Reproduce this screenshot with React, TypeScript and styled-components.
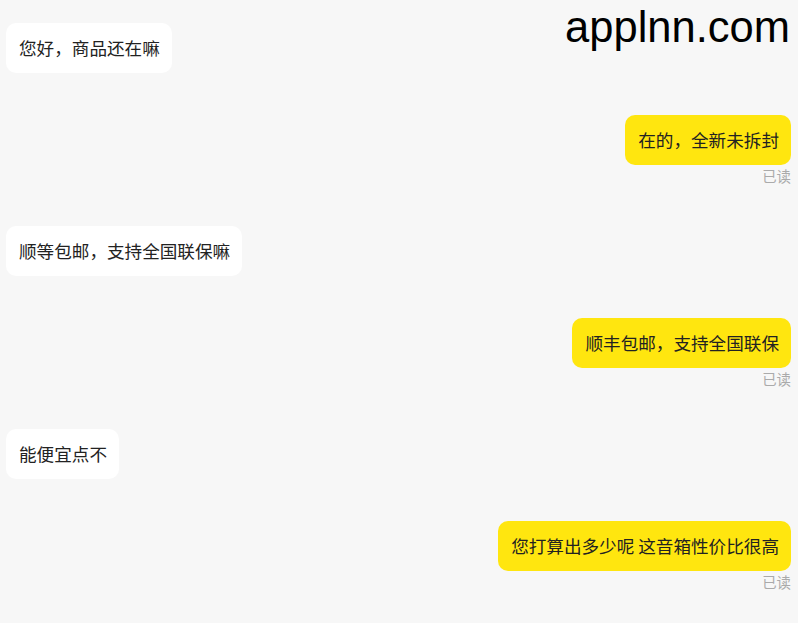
import styled, { createGlobalStyle } from 'styled-components';

const GlobalStyle = createGlobalStyle`
  html, body {
    margin: 0;
    padding: 0;
    background: #f7f7f7;
  }
  body {
    font-family: "Noto Sans CJK SC", "Noto Sans", sans-serif;
  }
`;

const Page = styled.div`
  position: relative;
  min-height: 623px;
  padding: 23px 7px 0 6px;
  box-sizing: border-box;
`;

const Watermark = styled.div`
  position: absolute;
  top: 0;
  right: 8px;
  font-family: "Liberation Sans", Arial, sans-serif;
  font-size: 43.5px;
  line-height: 54px;
  color: #000;
`;

const Thread = styled.div`
  display: flex;
  flex-direction: column;
  gap: 42px;
`;

const Message = styled.div<{ mine: boolean }>`
  display: flex;
  flex-direction: column;
  align-items: ${props => (props.mine ? 'flex-end' : 'flex-start')};
`;

const Bubble = styled.div<{ mine: boolean }>`
  background: ${props => (props.mine ? '#ffe60f' : '#ffffff')};
  color: #222;
  font-size: 17.6px;
  line-height: 26px;
  padding: 12px 12px 12px 13px;
  border-radius: 10px;
  white-space: pre;
`;

const ReadMark = styled.div`
  margin-top: 3px;
  font-size: 14.4px;
  line-height: 16px;
  color: #aaa;
`;

const messages = [
  { text: '您好，商品还在嘛', mine: false },
  { text: '在的，全新未拆封', mine: true },
  { text: '顺等包邮，支持全国联保嘛', mine: false },
  { text: '顺丰包邮，支持全国联保', mine: true },
  { text: '能便宜点不', mine: false },
  { text: '您打算出多少呢 这音箱性价比很高', mine: true },
];

export default function App() {
  return (
    <>
      <GlobalStyle />
      <Page>
        <Watermark>applnn.com</Watermark>
        <Thread>
          {messages.map((m, i) => (
            <Message key={i} mine={m.mine}>
              <Bubble mine={m.mine}>{m.text}</Bubble>
              {m.mine && <ReadMark>已读</ReadMark>}
            </Message>
          ))}
        </Thread>
      </Page>
    </>
  );
}
